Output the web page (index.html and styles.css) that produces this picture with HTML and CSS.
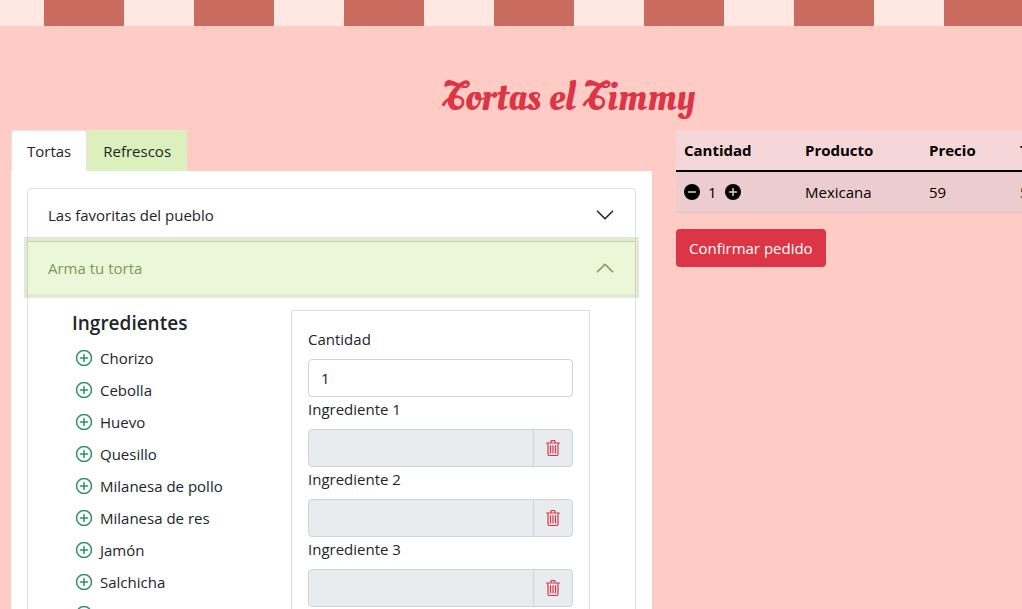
FILE: index.html
```html
<!DOCTYPE html>
<html lang="es">
<head>
<meta charset="utf-8">
<meta name="viewport" content="width=device-width, initial-scale=1">
<title>Tortas el Timmy</title>
<link rel="stylesheet" href="styles.css">
</head>
<body>
<svg class="sprite" aria-hidden="true">
  <symbol id="plus-circle" viewBox="0 0 16 16"><path d="M8 15A7 7 0 1 1 8 1a7 7 0 0 1 0 14m0 1A8 8 0 1 0 8 0a8 8 0 0 0 0 16"/><path d="M8 4a.5.5 0 0 1 .5.5v3h3a.5.5 0 0 1 0 1h-3v3a.5.5 0 0 1-1 0v-3h-3a.5.5 0 0 1 0-1h3v-3A.5.5 0 0 1 8 4"/></symbol>
  <symbol id="plus-fill" viewBox="0 0 16 16"><circle cx="8" cy="8" r="8"/><path d="M8 4.500v7M4.500 8h7" stroke="#eccccf" stroke-width="1.500" stroke-linecap="round"/></symbol>
  <symbol id="dash-fill" viewBox="0 0 16 16"><circle cx="8" cy="8" r="8"/><path d="M4.500 8h7" stroke="#eccccf" stroke-width="1.500" stroke-linecap="round"/></symbol>
  <symbol id="trash" viewBox="0 0 16 16"><path d="M6 2.500V1.500a1 1 0 0 1 1-1h2a1 1 0 0 1 1 1v1M1.500 3h13M3 3v11a1.500 1.500 0 0 0 1.500 1.500h7A1.500 1.500 0 0 0 13 14V3M5.500 5.500v7.500M8 5.500v7.500M10.500 5.500v7.500" fill="none" stroke="currentColor" stroke-width="1.200" stroke-linecap="round"/></symbol>
  <symbol id="chevron" viewBox="0 0 16 16"><path fill-rule="evenodd" d="M1.646 4.646a.5.5 0 0 1 .708 0L8 10.293l5.646-5.647a.5.5 0 0 1 .708.708l-6 6a.5.5 0 0 1-.708 0l-6-6a.5.5 0 0 1 0-.708z"/></symbol>
</svg>
<div class="page">
  <header class="header">
    <div class="awning"></div>
    <h1 class="title">Tortas el Timmy</h1>
  </header>
  <main class="layout">
    <section class="menu">
      <div class="tabs" role="tablist">
        <button class="tab tab-active" role="tab" aria-selected="true">Tortas</button>
        <button class="tab" role="tab" aria-selected="false">Refrescos</button>
      </div>
      <div class="panel" role="tabpanel">
        <div class="accordion">
          <button class="accordion-button" aria-expanded="false">Las favoritas del pueblo<svg class="chevron"><use href="#chevron"/></svg></button>
          <button class="accordion-button accordion-open" aria-expanded="true">Arma tu torta<svg class="chevron"><use href="#chevron"/></svg></button>
          <div class="accordion-body">
            <div class="ingredients">
              <h2 class="subtitle">Ingredientes</h2>
              <ul class="list">
                <li><button class="add"><svg class="icon"><use href="#plus-circle"/></svg><span>Chorizo</span></button></li>
                <li><button class="add"><svg class="icon"><use href="#plus-circle"/></svg><span>Cebolla</span></button></li>
                <li><button class="add"><svg class="icon"><use href="#plus-circle"/></svg><span>Huevo</span></button></li>
                <li><button class="add"><svg class="icon"><use href="#plus-circle"/></svg><span>Quesillo</span></button></li>
                <li><button class="add"><svg class="icon"><use href="#plus-circle"/></svg><span>Milanesa de pollo</span></button></li>
                <li><button class="add"><svg class="icon"><use href="#plus-circle"/></svg><span>Milanesa de res</span></button></li>
                <li><button class="add"><svg class="icon"><use href="#plus-circle"/></svg><span>Jamón</span></button></li>
                <li><button class="add"><svg class="icon"><use href="#plus-circle"/></svg><span>Salchicha</span></button></li>
                <li><button class="add"><svg class="icon"><use href="#plus-circle"/></svg><span>Piña</span></button></li>
              </ul>
            </div>
            <form class="form">
              <label class="label" for="qty">Cantidad</label>
              <input class="input" id="qty" type="text" inputmode="numeric" value="1">
              <label class="label" for="ing1">Ingrediente 1</label>
              <div class="group"><input class="input" id="ing1" type="text" disabled><button class="trash" type="button" aria-label="Quitar ingrediente 1"><svg class="icon"><use href="#trash"/></svg></button></div>
              <label class="label" for="ing2">Ingrediente 2</label>
              <div class="group"><input class="input" id="ing2" type="text" disabled><button class="trash" type="button" aria-label="Quitar ingrediente 2"><svg class="icon"><use href="#trash"/></svg></button></div>
              <label class="label" for="ing3">Ingrediente 3</label>
              <div class="group"><input class="input" id="ing3" type="text" disabled><button class="trash" type="button" aria-label="Quitar ingrediente 3"><svg class="icon"><use href="#trash"/></svg></button></div>
            </form>
          </div>
        </div>
      </div>
    </section>
    <section class="order">
      <table class="table">
        <thead><tr><th class="col-qty">Cantidad</th><th class="col-product">Producto</th><th class="col-price">Precio</th><th>Total</th></tr></thead>
        <tbody><tr>
          <td><div class="stepper"><button class="step" aria-label="Quitar uno"><svg class="icon"><use href="#dash-fill"/></svg></button><span>1</span><button class="step" aria-label="Agregar uno"><svg class="icon"><use href="#plus-fill"/></svg></button></div></td>
          <td>Mexicana</td><td>59</td><td>59</td>
        </tr></tbody>
      </table>
      <button class="confirm">Confirmar pedido</button>
    </section>
  </main>
</div>
</body>
</html>
```
FILE: styles.css
```css
* { box-sizing: border-box; }
html { scrollbar-width: none; }
body {
  margin: 0;
  background: #ffcbc5;
  color: #212529;
  font: 15px/24px "Segoe UI", "Open Sans", "Noto Sans", sans-serif;
}
button, input { font: inherit; color: inherit; margin: 0; }
button { border: 0; background: none; padding: 0; cursor: pointer; }
.sprite { position: absolute; width: 0; height: 0; }
.icon { display: block; width: 16px; height: 16px; fill: currentColor; overflow: visible; }
.page { min-width: 1138px; }
.awning {
  height: 26px;
  background: repeating-linear-gradient(90deg, #c96b5f 0 80px, #ffe7e2 80px 150px) 44px 0 / 150px 100%;
}
.title {
  margin: 0;
  padding: 48px 0 8px;
  color: #dc3545;
  font: 500 40px/48px "Oleo Script Swash Caps", "Liberation Serif", serif;
  text-align: center;
}
.layout {
  display: grid;
  grid-template-columns: repeat(12, 1fr);
  column-gap: 24px;
  padding: 0 11px;
}
.menu { grid-column: span 7; }
.order { grid-column: span 5; }
.tabs { display: flex; }
.tab {
  height: 41px;
  padding: 0 15px;
  border: 1px solid #dbf0bc;
  border-bottom: 0;
  background: #dbf0bc;
}
.tab-active {
  border-color: #f3dfdd;
  border-radius: 4px 4px 0 0;
  background: #fff;
}
.panel { padding: 16px; border-top: 1px solid #fff; background: #fff; }
.accordion { border: 1px solid #dee2e6; border-radius: 4px; }
.accordion-button {
  display: flex;
  align-items: center;
  justify-content: space-between;
  width: 100%;
  height: 52px;
  padding: 0 20px;
}
.chevron { width: 20px; height: 20px; fill: currentColor; stroke: currentColor; stroke-width: .2px; }
.accordion-open {
  height: 53px;
  border-top: 1px solid #c3d3ad;
  background: #ecf7da;
  color: #7b9b4f;
  box-shadow: 0 0 0 4px rgba(171, 196, 130, .35);
}
.accordion-open .chevron { transform: rotate(180deg); }
.accordion-body {
  display: grid;
  grid-template-columns: 219fr 299fr;
  align-items: start;
  padding: 16px 45px 16px 44px;
}
.subtitle { margin: 0 0 6px; font-size: 19px; line-height: 26px; font-weight: 600; }
.list { margin: 0; padding: 0 0 0 4px; list-style: none; }
.add { display: flex; align-items: center; gap: 8px; height: 32px; }
.add .icon { color: #198754; stroke: currentColor; stroke-width: .4px; }
.form { padding: 16px; border: 1px solid #dedede; }
.label { display: block; margin-bottom: 8px; }
.input {
  display: block;
  width: 100%;
  height: 38px;
  padding: 6px 12px;
  border: 1px solid #ced4da;
  border-radius: 4px;
  background: #fff;
}
.input:disabled { background: #e9ecef; }
.group { display: flex; }
.group .input { flex: 1; min-width: 0; border-radius: 4px 0 0 4px; }
.trash {
  display: grid;
  place-items: center;
  width: 40px;
  margin-left: -1px;
  border: 1px solid #ced4da;
  border-radius: 0 4px 4px 0;
  background: #e9ecef;
  color: #dc3545;
}
.table {
  width: 100%;
  margin-bottom: 16px;
  border-collapse: collapse;
  table-layout: fixed;
  background: #f5d6d9;
  color: #000;
  text-align: left;
}
.table th, .table td { padding: 8px; }
.table thead { border-bottom: 2px solid #000; }
.table tbody { background: #eccccf; border-bottom: 1px solid #dfc2c4; }
.col-qty { width: 121px; }
.col-product { width: 124px; }
.col-price { width: 91px; }
.stepper { display: flex; align-items: center; gap: 8px; }
.confirm {
  height: 38px;
  padding: 0 13px;
  border-radius: 4px;
  background: #dc3545;
  color: #fff;
}
```
